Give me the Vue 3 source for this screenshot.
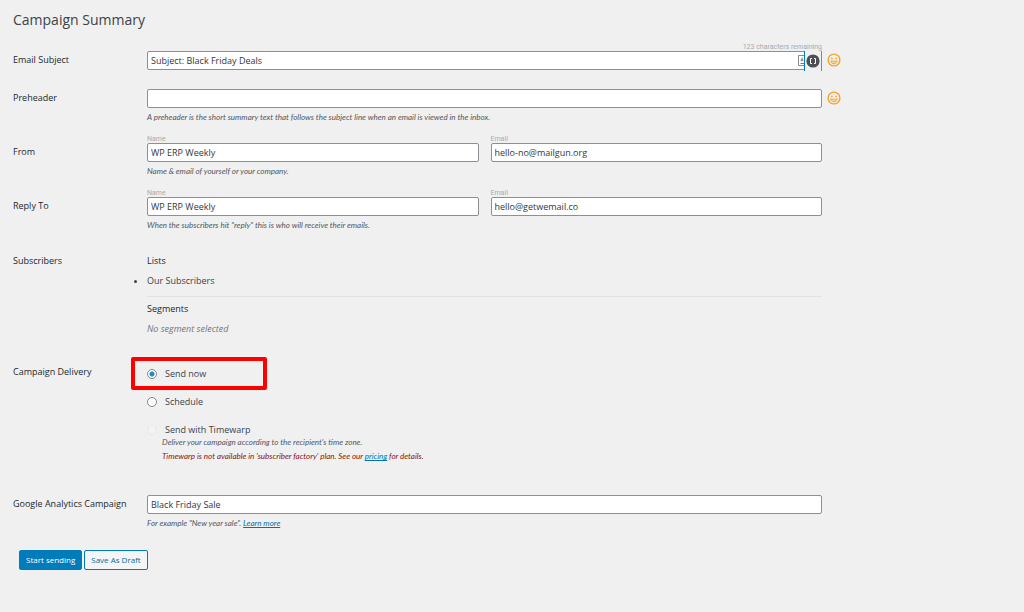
<script setup>
import { ref } from 'vue'

const subject = ref('Subject: Black Friday Deals')
const preheader = ref('')
const people = ref([
  { id: 'from', label: 'From', name: 'WP ERP Weekly', email: 'hello-no@mailgun.org', hint: 'Name & email of yourself or your company.' },
  { id: 'reply', label: 'Reply To', name: 'WP ERP Weekly', email: 'hello@getwemail.co', hint: 'When the subscribers hit "reply" this is who will receive their emails.' }
])
const delivery = ref('now')
const analytics = ref('Black Friday Sale')
</script>

<template>
  <form class="page" @submit.prevent>
    <h1>Campaign Summary</h1>

    <div class="row captioned">
      <label class="title" for="subject">Email Subject</label>
      <div class="field">
        <span class="caption counter">123 characters remaining</span>
        <div class="control">
          <input id="subject" v-model="subject" class="text" type="text" />
          <span class="tools">
            <svg class="cardmark" viewBox="0 0 6 11" aria-hidden="true">
              <path d="M6 .5H.5v10H6" fill="none" stroke="#8a8a8a" />
              <path d="M4 2.500v4M2.500 5h3M2.500 8.500h3.500" fill="none" stroke="#777" />
            </svg>
            <span class="toolbox">
              <svg viewBox="0 0 14 14" aria-hidden="true">
                <circle cx="7" cy="7" r="6.600" fill="#4b5055" />
                <path d="M6 4.500H4.500v5H6M8 4.500h1.500v5H8" fill="none" stroke="#fff" stroke-width="1" />
              </svg>
            </span>
          </span>
          <button class="emoji" type="button" aria-label="Insert emoji in subject">
            <svg viewBox="0 0 14 14" aria-hidden="true">
              <circle cx="7" cy="7" r="5.900" fill="none" stroke="#f5a52f" stroke-width="1.400" />
              <circle cx="4.900" cy="5.400" r=".9" fill="#f5a52f" />
              <circle cx="9.100" cy="5.400" r=".9" fill="#f5a52f" />
              <path d="M3.700 7.900c1 .5 5.600.5 6.600 0c-.3 1.900-1.700 2.900-3.300 2.900s-3-1-3.300-2.900z" fill="#f5a52f" fill-opacity=".35" stroke="#f5a52f" stroke-width=".9" />
            </svg>
          </button>
        </div>
      </div>
    </div>

    <div class="row gap-m">
      <label class="title" for="preheader">Preheader</label>
      <div class="field">
        <div class="control">
          <input id="preheader" v-model="preheader" class="text" type="text" />
          <button class="emoji" type="button" aria-label="Insert emoji in preheader">
            <svg viewBox="0 0 14 14" aria-hidden="true">
              <circle cx="7" cy="7" r="5.900" fill="none" stroke="#f5a52f" stroke-width="1.400" />
              <circle cx="4.900" cy="5.400" r=".9" fill="#f5a52f" />
              <circle cx="9.100" cy="5.400" r=".9" fill="#f5a52f" />
              <path d="M3.700 7.900c1 .5 5.600.5 6.600 0c-.3 1.900-1.700 2.900-3.300 2.900s-3-1-3.300-2.900z" fill="#f5a52f" fill-opacity=".35" stroke="#f5a52f" stroke-width=".9" />
            </svg>
          </button>
        </div>
        <p class="hint">A preheader is the short summary text that follows the subject line when an email is viewed in the inbox.</p>
      </div>
    </div>

    <div v-for="p in people" :key="p.id" class="row captioned gap-s">
      <span class="title">{{ p.label }}</span>
      <div class="field">
        <div class="pair">
          <div>
            <label class="caption" :for="p.id + '-name'">Name</label>
            <input :id="p.id + '-name'" v-model="p.name" class="text" type="text" />
          </div>
          <div>
            <label class="caption" :for="p.id + '-email'">Email</label>
            <input :id="p.id + '-email'" v-model="p.email" class="text" type="email" />
          </div>
        </div>
        <p class="hint">{{ p.hint }}</p>
      </div>
    </div>

    <div class="row plain gap-l">
      <span class="title">Subscribers</span>
      <div class="field">
        <h2>Lists</h2>
        <ul>
          <li>Our Subscribers</li>
        </ul>
        <hr />
        <h2>Segments</h2>
        <p class="empty">No segment selected</p>
      </div>
    </div>

    <div class="row plain gap-xl" role="radiogroup" aria-labelledby="delivery-title">
      <span id="delivery-title" class="title">Campaign Delivery</span>
      <div class="field options">
        <div class="option marked">
          <input id="now" v-model="delivery" type="radio" name="delivery" value="now" />
          <label for="now">Send now</label>
        </div>
        <div class="option">
          <input id="schedule" v-model="delivery" type="radio" name="delivery" value="schedule" />
          <label for="schedule">Schedule</label>
        </div>
        <div class="option">
          <input id="timewarp" v-model="delivery" type="radio" name="delivery" value="timewarp" disabled />
          <label for="timewarp">Send with Timewarp</label>
        </div>
        <div class="notes">
          <p class="hint">Deliver your campaign according to the recipient's time zone.</p>
          <p class="hint warning">Timewarp is not available in 'subscriber factory' plan. See our <a href="#pricing">pricing</a> for details.</p>
        </div>
      </div>
    </div>

    <div class="row gap-xxl">
      <label class="title" for="analytics">Google Analytics Campaign</label>
      <div class="field">
        <input id="analytics" v-model="analytics" class="text" type="text" />
        <p class="hint">For example "New year sale". <a href="#learn">Learn more</a></p>
      </div>
    </div>

    <div class="actions">
      <button class="btn primary" type="submit">Start sending</button>
      <button class="btn" type="button">Save As Draft</button>
    </div>
  </form>
</template>

<style>
body {
  background: #f0f0f0;
}
</style>

<style scoped>
.page {
  padding: 10px 202px 40px 13px;
  font-family: "Open Sans", "Noto Sans", sans-serif;
  font-size: 9px;
  line-height: 12px;
  color: #3c434a;
}
h1, h2, p, ul {
  margin: 0;
  padding: 0;
}
h1 {
  font-size: 14px;
  line-height: 20px;
  font-weight: 400;
  margin-bottom: 13px;
}
.row {
  display: grid;
  grid-template-columns: 134px minmax(0, 1fr);
}
.title {
  padding-top: 3px;
  font-weight: 500;
  color: #23282d;
}
.captioned .title {
  padding-top: 11px;
}
.plain .title {
  padding-top: 0;
}
.gap-s { margin-top: 12px; }
.gap-m { margin-top: 19px; }
.gap-l { margin-top: 24px; }
.gap-xl { margin-top: 31px; }
.gap-xxl { margin-top: 33px; }
.caption {
  display: block;
  font-family: Roboto, "Open Sans", sans-serif;
  font-size: 7px;
  line-height: 8px;
  color: #a9abad;
}
.counter {
  text-align: right;
}
.control {
  position: relative;
}
.text {
  display: block;
  box-sizing: border-box;
  width: 100%;
  height: 19px;
  padding: 0 3px;
  border: 1px solid #8c8f94;
  border-radius: 2px;
  background: #fff;
  font: inherit;
  color: #32373c;
}
.tools {
  position: absolute;
  top: 0;
  right: 0;
  display: flex;
  align-items: center;
  height: 19px;
}
.cardmark {
  width: 6px;
  height: 11px;
}
.toolbox {
  display: flex;
  align-items: center;
  box-sizing: border-box;
  width: 18px;
  height: 20px;
  padding-left: 1px;
  border-left: 1px solid #007cba;
  border-right: 1px solid #7e8993;
  background: #f0f0f0;
}
.toolbox svg {
  width: 14px;
  height: 14px;
}
.emoji {
  position: absolute;
  left: 100%;
  top: 2px;
  margin-left: 5px;
  padding: 0;
  border: 0;
  background: none;
}
.emoji svg {
  display: block;
  width: 14px;
  height: 14px;
}
.hint {
  margin-top: 3px;
  font-family: Lato, "Open Sans", sans-serif;
  font-size: 8px;
  font-style: italic;
  color: #50575e;
}
.pair {
  display: grid;
  grid-template-columns: 1fr 1fr;
  gap: 12px;
}
h2 {
  font-size: 9px;
  line-height: 12px;
  font-weight: 500;
  color: #23282d;
}
ul {
  margin-top: 8px;
}
hr {
  margin: 9px 0 6px;
  border: 0;
  border-top: 1px solid #e2e3e4;
}
.empty {
  margin-top: 8px;
  font-style: italic;
  color: #72777c;
}
.options {
  padding-top: 2px;
}
.option {
  position: relative;
  display: flex;
  align-items: center;
  gap: 8px;
  height: 12px;
  margin-bottom: 16px;
  font-weight: 500;
}
.option:nth-child(3) {
  margin-bottom: 0;
}
.marked::after {
  content: "";
  position: absolute;
  left: -16px;
  top: -11px;
  box-sizing: border-box;
  width: 136px;
  height: 33px;
  border: 4px solid #fe0000;
  border-radius: 2px;
  pointer-events: none;
}
.option input {
  appearance: none;
  box-sizing: border-box;
  width: 10px;
  height: 10px;
  margin: 0;
  border: 1px solid #7e8993;
  border-radius: 50%;
  background: #fff;
}
.option input:checked {
  background: radial-gradient(circle, #1e8cbe 2px, #fff 3px);
}
.option input:disabled {
  border-color: #e6e7e8;
  background: #f3f3f3;
}
.notes {
  padding-left: 15px;
}
.notes .hint {
  margin: 0;
}
.notes .warning {
  margin-top: 2px;
  color: #8a1010;
}
a {
  color: #0073aa;
}
.actions {
  display: flex;
  gap: 2px;
  margin: 21px 0 0 6px;
}
.btn {
  box-sizing: border-box;
  height: 20px;
  padding: 0 6px;
  border: 1px solid #007cba;
  border-radius: 2px;
  background: #f3f5f6;
  font: inherit;
  font-size: 8px;
  color: #0071a1;
}
.primary {
  background: #007cba;
  color: #fff;
}
</style>
